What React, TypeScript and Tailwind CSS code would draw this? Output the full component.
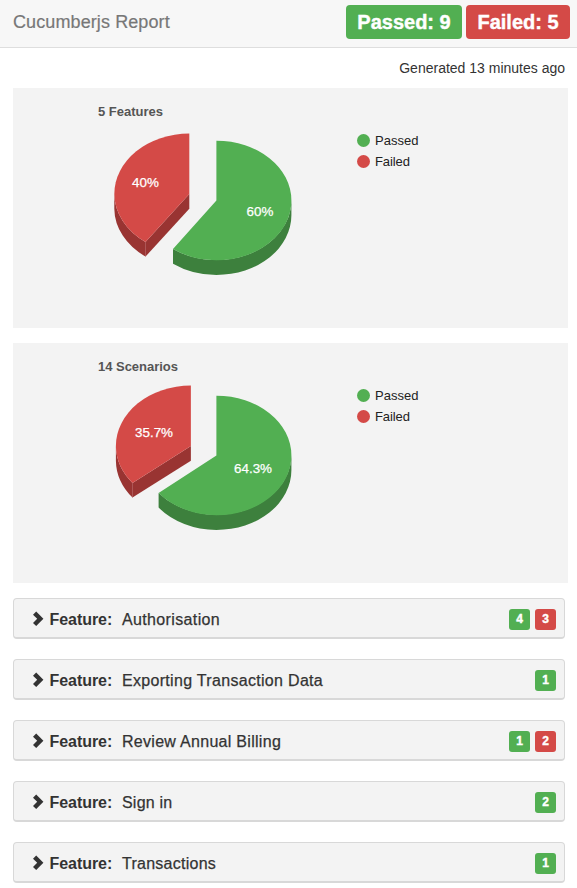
type Slice = { label: string; x: number; y: number };

type ChartProps = {
  title: string;
  titleWidth: number;
  greenTip: [number, number];
  redApex: [number, number];
  redTip: [number, number];
  passed: Slice;
  failed: Slice;
  labelWidth: number;
};

const DEPTH = 14.7;
const CX = 203.4;
const CY = 112.5;
const RX = 75;
const RY = 59.8;

function PieChart({ title, titleWidth, greenTip, redApex, redTip, passed, failed, labelWidth }: ChartProps) {
  const [gx, gy] = greenTip;
  const [ax, ay] = redApex;
  const [tx, ty] = redTip;
  const right = CX + RX;
  const left = ax - RX;
  return (
    <section className="h-[240px] w-[555px] bg-[#f3f3f3]">
      <svg width="555" height="240" viewBox="0 0 555 240" fontFamily="'Liberation Sans', Arial, sans-serif" fontSize="13">
        <text x="85" y="28" fontWeight="bold" fill="#555" textLength={titleWidth}>{title}</text>
        <path
          fill="#3d803d"
          d={`M${right} ${CY}A${RX} ${RY} 0 0 1 ${gx} ${gy}v${DEPTH}A${RX} ${RY} 0 0 0 ${CX} ${CY + RY + DEPTH}A${RX} ${RY} 0 0 0 ${right} ${CY + DEPTH}Z`}
        />
        <path
          fill="#52af52"
          d={`M${CX} ${CY}V${CY - RY}A${RX} ${RY} 0 0 1 ${right} ${CY}A${RX} ${RY} 0 0 1 ${CX} ${CY + RY}A${RX} ${RY} 0 0 1 ${gx} ${gy}Z`}
        />
        <path fill="#993432" d={`M${left} ${ay}A${RX} ${RY} 0 0 0 ${tx} ${ty}v${DEPTH}A${RX} ${RY} 0 0 1 ${left} ${ay + DEPTH}Z`} />
        <path fill="#993432" d={`M${ax} ${ay}v${DEPTH}L${tx} ${ty + DEPTH}v${-DEPTH}Z`} />
        <path fill="none" stroke="#a94543" strokeWidth=".4" d={`M${tx} ${ty}v${DEPTH}`} />
        <path
          fill="#d44a47"
          d={`M${ax} ${ay}V${ay - RY - 0.6}A${RX} ${RY + 0.6} 0 0 0 ${left} ${ay}A${RX} ${RY} 0 0 0 ${tx} ${ty}Z`}
        />
        <g fill="#fff" stroke="#fff" strokeWidth=".25" fontSize="13.4">
          <text x={passed.x} y={passed.y} textLength={labelWidth}>{passed.label}</text>
          <text x={failed.x} y={failed.y} textLength={labelWidth}>{failed.label}</text>
        </g>
        <circle cx="350.5" cy="52.5" r="6.5" fill="#52af52" />
        <circle cx="350.5" cy="73.5" r="6.5" fill="#d44a47" />
        <g fill="#222">
          <text x="362" y="57" textLength="43.5">Passed</text>
          <text x="362" y="78" textLength="35">Failed</text>
        </g>
      </svg>
    </section>
  );
}

const features = [
  { name: "Authorisation", spacing: "tracking-[0.36px]", passed: 4, failed: 3 },
  { name: "Exporting Transaction Data", spacing: "tracking-[0.31px]", passed: 1, failed: 0 },
  { name: "Review Annual Billing", spacing: "tracking-[0.29px]", passed: 1, failed: 2 },
  { name: "Sign in", spacing: "tracking-[0.2px]", passed: 2, failed: 0 },
  { name: "Transactions", spacing: "tracking-[0.26px]", passed: 1, failed: 0 },
];

function Badge({ value, color }: { value: number; color: string }) {
  return (
    <span className={`flex size-[21px] items-center justify-center rounded-[3px] pb-px text-[12px] font-bold leading-none text-white [-webkit-text-stroke:0.4px_white] ${color}`}>
      {value}
    </span>
  );
}

export default function App() {
  return (
    <div className="h-[888px] w-[577px] overflow-hidden bg-white font-['Liberation_Sans',Arial,sans-serif] text-[#333]">
      <header className="flex h-[48px] items-start justify-between border-b border-[#dedede] bg-[#f7f7f7] pl-[13px] pr-[7px] pt-[5px]">
        <h1 className="pt-[7px] text-[18px] leading-5 tracking-[0.1px] text-[#777] [-webkit-text-stroke:0.2px_#777]">
          Cucumberjs Report
        </h1>
        <div className="flex gap-1 text-[20px] font-bold leading-[34px] text-white [-webkit-text-stroke:0.4px_white]">
          <span className="h-[34px] w-[116px] rounded-[4px] bg-[#52af52] text-center">Passed: 9</span>
          <span className="h-[34px] w-[104px] rounded-[4px] bg-[#d44a47] text-center">Failed: 5</span>
        </div>
      </header>
      <main className="pl-[13px]">
        <p className="h-[40px] pr-3 pt-[10px] text-right text-[14px] leading-5">Generated 13 minutes ago</p>
        <div className="flex flex-col gap-[15px]">
          <PieChart
            title="5 Features"
            titleWidth={65}
            greenTip={[160, 161]}
            redApex={[176.3, 106]}
            redTip={[132.5, 153.9]}
            passed={{ label: "60%", x: 233.5, y: 128 }}
            failed={{ label: "40%", x: 119, y: 99 }}
            labelWidth={27}
          />
          <PieChart
            title="14 Scenarios"
            titleWidth={80}
            greenTip={[145.6, 149.9]}
            redApex={[177.9, 103]}
            redTip={[119.5, 139.9]}
            passed={{ label: "64.3%", x: 221, y: 130 }}
            failed={{ label: "35.7%", x: 122, y: 94 }}
            labelWidth={38}
          />
        </div>
        <div className="mt-[15px] flex w-[552px] flex-col gap-5">
          {features.map((f) => (
            <div
              key={f.name}
              className="flex h-[41px] items-center rounded-[4px] border border-b-2 border-[#d8d8d8] bg-[#f3f3f3] pl-[19px] pr-2"
            >
              <svg width="11" height="16" viewBox="0 0 11 16" className="mr-[5.5px] mt-px shrink-0">
                <path d="M0 3.7 3.2 0.6 10.4 7.8 3.2 15.1 0 12 4.2 7.8Z" fill="#333" />
              </svg>
              <span className="w-[72.5px] pt-[3px] text-[16px] font-bold tracking-[-0.05px]">Feature:</span>
              <span className={`flex-1 pt-[3px] text-[16px] [-webkit-text-stroke:0.25px_#333] ${f.spacing}`}>{f.name}</span>
              <span className="flex gap-[5px] pt-[3px]">
                <Badge value={f.passed} color="bg-[#52af52]" />
                {f.failed > 0 && <Badge value={f.failed} color="bg-[#d44a47]" />}
              </span>
            </div>
          ))}
        </div>
      </main>
    </div>
  );
}
